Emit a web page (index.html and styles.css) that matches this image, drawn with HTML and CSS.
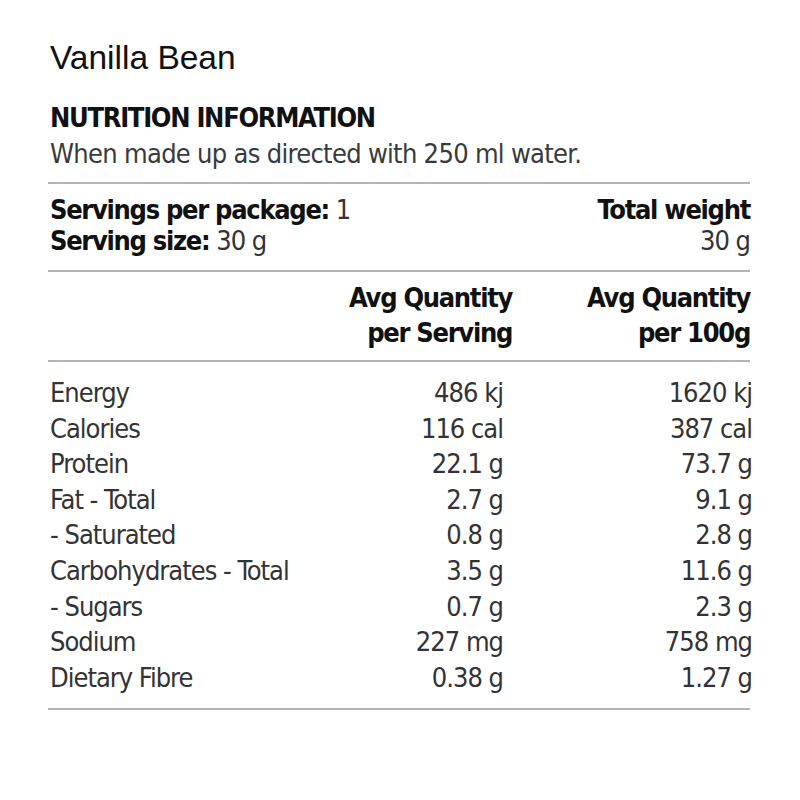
FILE: index.html
```html
<!DOCTYPE html>
<html lang="en">
<head>
<meta charset="utf-8">
<title>Vanilla Bean – Nutrition Information</title>
<link rel="stylesheet" href="styles.css">
</head>
<body>
<main class="page">
  <h1 class="title">Vanilla Bean</h1>
  <section class="panel">
    <header class="intro">
      <h2 class="heading">NUTRITION INFORMATION</h2>
      <p class="note">When made up as directed with 250 ml water.</p>
    </header>
    <div class="servings">
      <div class="serv-left">
        <div><span class="b">Servings per package:</span> 1</div>
        <div><span class="b">Serving size:</span> 30 g</div>
      </div>
      <div class="serv-right">
        <div class="b">Total weight</div>
        <div>30 g</div>
      </div>
    </div>
    <div class="grid heads">
      <div></div>
      <div class="head mid">Avg Quantity<br>per Serving</div>
      <div class="head">Avg Quantity<br>per 100g</div>
    </div>
    <div class="grid rows">
      <div>Energy</div><div class="v mid">486 kj</div><div class="v">1620 kj</div>
      <div>Calories</div><div class="v mid">116 cal</div><div class="v">387 cal</div>
      <div>Protein</div><div class="v mid">22.1 g</div><div class="v">73.7 g</div>
      <div>Fat - Total</div><div class="v mid">2.7 g</div><div class="v">9.1 g</div>
      <div>- Saturated</div><div class="v mid">0.8 g</div><div class="v">2.8 g</div>
      <div>Carbohydrates - Total</div><div class="v mid">3.5 g</div><div class="v">11.6 g</div>
      <div>- Sugars</div><div class="v mid">0.7 g</div><div class="v">2.3 g</div>
      <div>Sodium</div><div class="v mid">227 mg</div><div class="v">758 mg</div>
      <div>Dietary Fibre</div><div class="v mid">0.38 g</div><div class="v">1.27 g</div>
    </div>
  </section>
</main>
</body>
</html>
```
FILE: styles.css
```css
html, body {
  margin: 0;
  padding: 0;
  background: #ffffff;
}

.page {
  padding: 38px 50px 0 48px;
  width: 702px;
}

.title {
  margin: 0 0 0 2px;
  font-family: "Liberation Sans", Arial, sans-serif;
  font-weight: 400;
  font-size: 33.5px;
  line-height: 40px;
  color: #111111;
}

.panel {
  margin-top: 22px;
  font-family: "DejaVu Sans Condensed", "DejaVu Sans", sans-serif;
  font-stretch: condensed;
  font-size: 27px;
  letter-spacing: -1px;
  white-space: nowrap;
  color: #333333;
}

.intro {
  padding: 0 0 10px 2px;
  border-bottom: 2px solid #b4b4b4;
}

.heading {
  margin: 0;
  font-size: 27px;
  font-weight: 700;
  line-height: 36px;
  letter-spacing: -1.3px;
  color: #111111;
}

.note {
  margin: 0;
  line-height: 36px;
  letter-spacing: -0.7px;
  color: #3a3a3a;
}

.servings {
  display: flex;
  justify-content: space-between;
  padding: 10px 0 14px 2px;
  line-height: 31px;
  border-bottom: 2px solid #b4b4b4;
}

.serv-right {
  text-align: right;
}

.b {
  font-weight: 700;
  letter-spacing: -1.3px;
  color: #111111;
}

.grid {
  display: grid;
  grid-template-columns: 1fr 200px 238px;
}

.heads {
  padding: 8px 0 10px;
  line-height: 35px;
  border-bottom: 2px solid #b4b4b4;
}

.head {
  text-align: right;
  font-weight: 700;
  letter-spacing: -1.3px;
  color: #111111;
}

.rows {
  padding: 13px 0 13px 2px;
  line-height: 35.6px;
  border-bottom: 2px solid #b4b4b4;
}

.v {
  text-align: right;
  margin-right: -2px;
}

.v.mid {
  margin-right: 0;
  padding-right: 9px;
}
```
